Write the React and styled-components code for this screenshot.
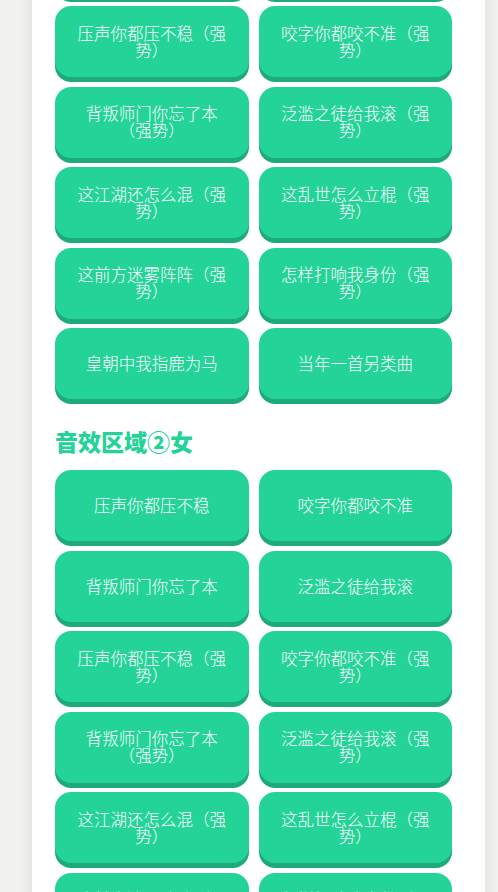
import React from "react";
import styled, { createGlobalStyle } from "styled-components";

const GlobalStyle = createGlobalStyle`
  html, body {
    margin: 0;
    padding: 0;
    background: #f1f1ef;
    overflow: hidden;
  }
  body {
    font-family: "Noto Sans CJK SC", "Noto Sans", sans-serif;
  }
`;

const sections = [
  {
    title: "音效区域①男",
    sounds: [
      "背叛师门你忘了本",
      "泛滥之徒给我滚",
      "压声你都压不稳（强势）",
      "咬字你都咬不准（强势）",
      "背叛师门你忘了本（强势）",
      "泛滥之徒给我滚（强势）",
      "这江湖还怎么混（强势）",
      "这乱世怎么立棍（强势）",
      "这前方迷雾阵阵（强势）",
      "怎样打响我身份（强势）",
      "皇朝中我指鹿为马",
      "当年一首另类曲",
    ],
  },
  {
    title: "音效区域②女",
    sounds: [
      "压声你都压不稳",
      "咬字你都咬不准",
      "背叛师门你忘了本",
      "泛滥之徒给我滚",
      "压声你都压不稳（强势）",
      "咬字你都咬不准（强势）",
      "背叛师门你忘了本（强势）",
      "泛滥之徒给我滚（强势）",
      "这江湖还怎么混（强势）",
      "这乱世怎么立棍（强势）",
      "这前方迷雾阵阵（强势）",
      "怎样打响我身份（强势）",
    ],
  },
];

const Card = styled.main`
  width: 453px;
  margin: -74.5px 0 0 32px;
  padding: 0 33px 40px 23px;
  box-sizing: border-box;
  background: #ffffff;
  box-shadow: 0 0 14px rgba(0, 0, 0, 0.09);
  min-height: 1200px;
`;

const Section = styled.section`
  display: flex;
  flex-direction: column;
`;

const Title = styled.h2`
  margin: 26px 0 13px;
  font-size: 23px;
  line-height: 32px;
  font-weight: 800;
  color: #24d398;
  display: ${({ $hidden }) => ($hidden ? "none" : "block")};
`;

const Grid = styled.div`
  display: grid;
  grid-template-columns: 1fr 1fr;
  column-gap: 10px;
  row-gap: 9.5px;
`;

const SoundButton = styled.button`
  height: 71px;
  padding: 0 18px;
  border: none;
  border-radius: 16px;
  background: #24d398;
  box-shadow: 0 5px 0 #1eab7c;
  color: #ffffff;
  font-family: "Noto Sans CJK SC", "Noto Sans", sans-serif;
  font-size: 16.5px;
  font-weight: 300;
  line-height: 17px;
  text-align: center;
  cursor: pointer;
`;

export default function App() {
  return (
    <>
      <GlobalStyle />
      <Card>
        {sections.map((s, i) => (
          <Section key={s.title}>
            <Title $hidden={i === 0}>{s.title}</Title>
            <Grid>
              {s.sounds.map((name) => (
                <SoundButton key={name}>{name}</SoundButton>
              ))}
            </Grid>
          </Section>
        ))}
      </Card>
    </>
  );
}
